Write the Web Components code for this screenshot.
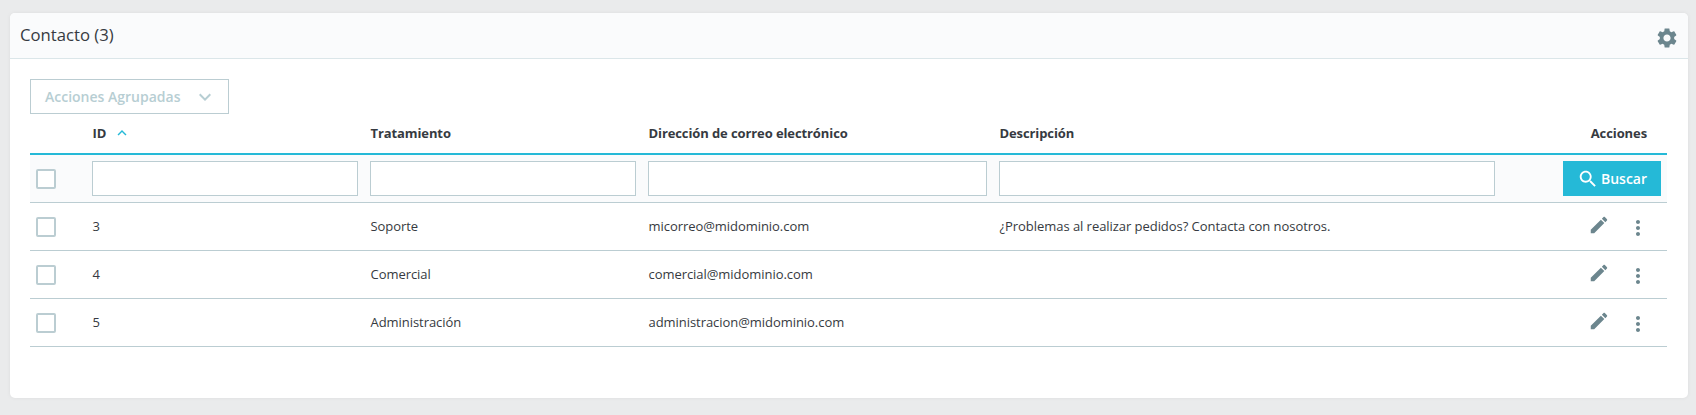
<!DOCTYPE html>
<html lang="es">
<head>
<meta charset="utf-8">
<title>Contacto</title>
<style>
    html, body { margin: 0; background: #eaebec; }
    body {
        padding: 13px 8px 17px 10px;
        font-family: 'Open Sans', 'Noto Sans', sans-serif;
        font-size: 13px;
        color: #363a41;
    }
</style>
</head>
<body>
<ps-card heading="Contacto (3)">
    <ps-icon slot="tools" name="settings" size="24" style="color:#6c868e"></ps-icon>
    <ps-bulk-button label="Acciones Agrupadas"></ps-bulk-button>
    <ps-table>
        <ps-row kind="head">
            <ps-cell></ps-cell>
            <ps-cell text>ID<ps-icon name="up" size="18" style="color:#25b9d7;margin-left:7px"></ps-icon></ps-cell>
            <ps-cell text>Tratamiento</ps-cell>
            <ps-cell text>Dirección de correo electrónico</ps-cell>
            <ps-cell text>Descripción</ps-cell>
            <ps-cell align="end" inset="20">Acciones</ps-cell>
        </ps-row>
        <ps-row kind="filter">
            <ps-cell><ps-check></ps-check></ps-cell>
            <ps-cell><ps-input></ps-input></ps-cell>
            <ps-cell><ps-input></ps-input></ps-cell>
            <ps-cell><ps-input></ps-input></ps-cell>
            <ps-cell><ps-input></ps-input></ps-cell>
            <ps-cell align="end"><ps-search-button>Buscar</ps-search-button></ps-cell>
        </ps-row>
        <ps-row>
            <ps-cell><ps-check></ps-check></ps-cell>
            <ps-cell text>3</ps-cell>
            <ps-cell text>Soporte</ps-cell>
            <ps-cell text>micorreo@midominio.com</ps-cell>
            <ps-cell text>¿Problemas al realizar pedidos? Contacta con nosotros.</ps-cell>
            <ps-cell align="end"><ps-row-actions></ps-row-actions></ps-cell>
        </ps-row>
        <ps-row>
            <ps-cell><ps-check></ps-check></ps-cell>
            <ps-cell text>4</ps-cell>
            <ps-cell text>Comercial</ps-cell>
            <ps-cell text>comercial@midominio.com</ps-cell>
            <ps-cell text></ps-cell>
            <ps-cell align="end"><ps-row-actions></ps-row-actions></ps-cell>
        </ps-row>
        <ps-row>
            <ps-cell><ps-check></ps-check></ps-cell>
            <ps-cell text>5</ps-cell>
            <ps-cell text>Administración</ps-cell>
            <ps-cell text>administracion@midominio.com</ps-cell>
            <ps-cell text></ps-cell>
            <ps-cell align="end"><ps-row-actions></ps-row-actions></ps-cell>
        </ps-row>
    </ps-table>
</ps-card>

<script>
/* material icon paths, 24x24 */
const ICONS = {
    settings: 'M19.14 12.94c.04-.3.06-.61.06-.94 0-.32-.02-.64-.07-.94l2.03-1.58c.18-.14.23-.41.12-.61l-1.92-3.32c-.12-.22-.37-.29-.59-.22l-2.39.96c-.5-.38-1.03-.7-1.62-.94l-.36-2.54c-.04-.24-.24-.41-.48-.41h-3.84c-.24 0-.43.17-.47.41l-.36 2.54c-.59.24-1.13.57-1.62.94l-2.39-.96c-.22-.08-.47 0-.59.22L2.74 8.87c-.12.21-.08.47.12.61l2.03 1.58c-.05.3-.09.63-.09.94s.02.64.07.94l-2.03 1.58c-.18.14-.23.41-.12.61l1.92 3.32c.12.22.37.29.59.22l2.39-.96c.5.38 1.03.7 1.62.94l.36 2.54c.05.24.24.41.48.41h3.84c.24 0 .44-.17.47-.41l.36-2.54c.59-.24 1.13-.56 1.62-.94l2.39.96c.22.08.47 0 .59-.22l1.92-3.32c.12-.22.07-.47-.12-.61l-2.01-1.58zM12 15.6c-1.98 0-3.6-1.62-3.6-3.6s1.62-3.6 3.6-3.6 3.6 1.62 3.6 3.6-1.62 3.6-3.6 3.6z',
    edit: 'M3 17.25V21h3.75L17.81 9.94l-3.75-3.75L3 17.25zM20.71 7.04c.39-.39.39-1.02 0-1.41l-2.34-2.34c-.39-.39-1.02-.39-1.41 0l-1.83 1.83 3.75 3.75 1.83-1.83z',
    more: 'M12 8c1.1 0 2-.9 2-2s-.9-2-2-2-2 .9-2 2 .9 2 2 2zm0 2c-1.1 0-2 .9-2 2s.9 2 2 2 2-.9 2-2-.9-2-2-2zm0 6c-1.1 0-2 .9-2 2s.9 2 2 2 2-.9 2-2-.9-2-2-2z',
    search: 'M15.5 14h-.79l-.28-.27C15.41 12.59 16 11.11 16 9.5 16 5.91 13.09 3 9.5 3S3 5.91 3 9.5 5.91 16 9.5 16c1.61 0 3.09-.59 4.23-1.57l.27.28v.79l5 4.99L20.49 19l-4.99-5zm-6 0C7.01 14 5 11.99 5 9.5S7.01 5 9.5 5 14 7.01 14 9.5 11.99 14 9.5 14z',
    down: 'M7.41 8.59L12 13.17l4.59-4.58L18 10l-6 6-6-6 1.41-1.41z',
    up: 'M7.41 15.41L12 10.83l4.59 4.58L18 14l-6-6-6 6z'
};

class PsIcon extends HTMLElement {
    constructor() {
        super();
        this.attachShadow({mode: 'open'});
    }

    connectedCallback() {
        const size = this.getAttribute('size') || '24';
        const d = ICONS[this.getAttribute('name')] || '';
        this.shadowRoot.innerHTML = `
            <style>
                :host { display: inline-flex; flex: none; vertical-align: middle; }
                svg { display: block; fill: currentColor; }
            </style>
            <svg width="${size}" height="${size}" viewBox="0 0 24 24"><path d="${d}"/></svg>
        `;
    }
}

class PsCard extends HTMLElement {
    constructor() {
        super();
        this.attachShadow({mode: 'open'});
    }

    connectedCallback() {
        this.shadowRoot.innerHTML = `
            <style>
                :host {
                    display: block;
                    height: 385px;
                    background: #fff;
                    border-radius: 5px;
                    box-shadow: 0 0 4px 0 rgba(0, 0, 0, .06);
                    overflow: hidden;
                }
                header {
                    display: flex;
                    align-items: center;
                    justify-content: space-between;
                    height: 45px;
                    padding: 0 10px;
                    background: #fafbfc;
                    border-bottom: 1px solid #dbe6e9;
                    color: #363a41;
                }
                .title { font-size: 16.7px; margin-top: -2px; }
                .tools { display: flex; margin-top: 4px; margin-right: -1px; }
                .body { padding: 20px 21px 0 20px; }
            </style>
            <header>
                <span class="title">${this.getAttribute('heading') || ''}</span>
                <span class="tools"><slot name="tools"></slot></span>
            </header>
            <div class="body"><slot></slot></div>
        `;
    }
}

class PsBulkButton extends HTMLElement {
    constructor() {
        super();
        this.attachShadow({mode: 'open'});
    }

    connectedCallback() {
        this.shadowRoot.innerHTML = `
            <style>
                :host {
                    display: inline-flex;
                    align-items: center;
                    box-sizing: border-box;
                    width: 199px;
                    height: 35px;
                    padding: 0 14px;
                    border: 1px solid #bbcdd2;
                    color: #b7ced3;
                    font-size: 14px;
                    font-weight: 600;
                    vertical-align: top;
                }
                span { flex: 1; }
                ps-icon { margin-right: -3px; margin-top: 1px; }
            </style>
            <span>${this.getAttribute('label') || ''}</span>
            <ps-icon name="down" size="24"></ps-icon>
        `;
    }
}

class PsTable extends HTMLElement {
    constructor() {
        super();
        this.attachShadow({mode: 'open'});
        this.shadowRoot.innerHTML = `
            <style>
                :host { display: block; }
            </style>
            <slot></slot>
        `;
    }
}

class PsRow extends HTMLElement {
    constructor() {
        super();
        this.attachShadow({mode: 'open'});
        this.shadowRoot.innerHTML = `
            <style>
                :host {
                    display: grid;
                    grid-template-columns: 56px 278px 278px 351px 508px 166px;
                    height: 47px;
                    border-bottom: 1px solid #bbcdd2;
                    align-items: center;
                }
                :host([kind="head"]) {
                    height: 39px;
                    border-bottom: 2px solid #25b9d7;
                    font-weight: 700;
                    letter-spacing: -0.1px;
                }
                :host([kind="filter"]) { background: #fafbfc; }
            </style>
            <slot></slot>
        `;
    }
}

class PsCell extends HTMLElement {
    constructor() {
        super();
        this.attachShadow({mode: 'open'});
        this.shadowRoot.innerHTML = `
            <style>
                :host {
                    display: flex;
                    align-items: center;
                    min-width: 0;
                    padding: 0 6px;
                }
                :host([align="end"]) { justify-content: flex-end; }
                :host([inset="20"]) { padding-right: 20px; }
                :host([text]) { padding: 0 6px 2px 6.5px; letter-spacing: -0.05px; }
                :host-context([kind="head"]) { padding-bottom: 1px; letter-spacing: -0.1px; }
            </style>
            <slot></slot>
        `;
    }
}

class PsCheck extends HTMLElement {
    constructor() {
        super();
        this.attachShadow({mode: 'open'});
        this.shadowRoot.innerHTML = `
            <style>
                :host {
                    display: block;
                    box-sizing: border-box;
                    width: 20px;
                    height: 20px;
                    background: #fff;
                    border: 2px solid #bbcdd2;
                    border-radius: 2px;
                }
            </style>
        `;
    }
}

class PsInput extends HTMLElement {
    constructor() {
        super();
        this.attachShadow({mode: 'open'});
        this.shadowRoot.innerHTML = `
            <style>
                :host { display: block; flex: 1; }
                input {
                    display: block;
                    box-sizing: border-box;
                    width: 100%;
                    height: 35px;
                    margin: 0;
                    padding: 0 8px;
                    background: #fff;
                    border: 1px solid #bbcdd2;
                    border-radius: 0;
                    outline: none;
                }
            </style>
            <input type="text">
        `;
    }
}

class PsSearchButton extends HTMLElement {
    constructor() {
        super();
        this.attachShadow({mode: 'open'});
        this.shadowRoot.innerHTML = `
            <style>
                :host {
                    display: inline-flex;
                    align-items: center;
                    justify-content: center;
                    gap: 2px;
                    width: 98px;
                    height: 35px;
                    background: #25b9d7;
                    color: #fff;
                    font-size: 14px;
                    font-weight: 600;
                    letter-spacing: 0;
                }
            </style>
            <ps-icon name="search" size="22"></ps-icon>
            <slot></slot>
        `;
    }
}

class PsRowActions extends HTMLElement {
    constructor() {
        super();
        this.attachShadow({mode: 'open'});
        this.shadowRoot.innerHTML = `
            <style>
                :host {
                    display: flex;
                    align-items: center;
                    gap: 16px;
                    margin-right: 11px;
                    color: #6c868e;
                }
                .edit { margin-top: -3px; }
                .more { margin-top: 3px; }
            </style>
            <ps-icon class="edit" name="edit" size="22"></ps-icon>
            <ps-icon class="more" name="more" size="24"></ps-icon>
        `;
    }
}

customElements.define('ps-icon', PsIcon);
customElements.define('ps-card', PsCard);
customElements.define('ps-bulk-button', PsBulkButton);
customElements.define('ps-table', PsTable);
customElements.define('ps-row', PsRow);
customElements.define('ps-cell', PsCell);
customElements.define('ps-check', PsCheck);
customElements.define('ps-input', PsInput);
customElements.define('ps-search-button', PsSearchButton);
customElements.define('ps-row-actions', PsRowActions);
</script>
</body>
</html>
